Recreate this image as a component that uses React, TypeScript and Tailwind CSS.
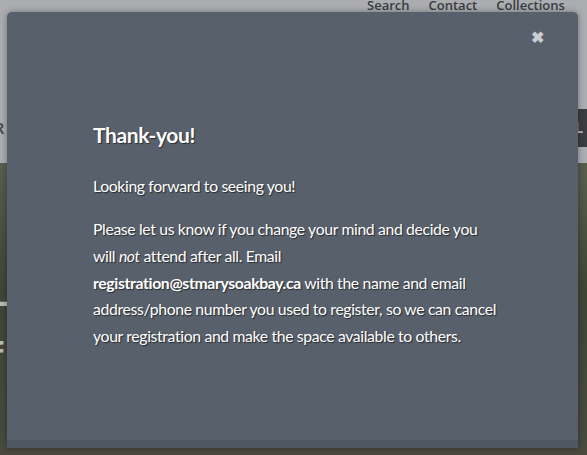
import React from "react";

export default function App() {
  const shadow = "[text-shadow:1px_1px_1px_rgba(0,0,0,0.55)]";
  return (
    <div className="relative w-[587px] h-[455px] overflow-hidden bg-[#abadb1]" style={{ fontFamily: "Lato, 'Open Sans', sans-serif" }}>
      {/* page behind */}
      <div className="flex flex-col h-full">
        <div className="h-[163px] relative flex flex-col">
          <div className="flex gap-[19px] pl-[367px] -mt-[4px] text-[13px] font-semibold text-[#3a3c41] whitespace-nowrap" style={{ fontFamily: "'Open Sans', sans-serif" }}>
            <span>Search</span>
            <span>Contact</span>
            <span>Collections</span>
          </div>
          <div className="flex justify-between items-center mt-[93px]">
            <span className="text-[16px] font-bold text-[#4a4c52] -ml-[6px]">R</span>
            <div className="w-[12px] h-[38px] bg-[#3b3d42] flex items-center text-[15px] font-bold text-[#b8bbc0] overflow-hidden">L</div>
          </div>
        </div>
        <div className="flex-1 bg-[linear-gradient(180deg,#5a5d4e_0%,#3f4437_45%,#4a4a3f_100%)] relative">
          <div className="absolute left-[-14px] top-[118px] text-[44px] font-bold text-[#b9bab4] leading-none">H</div>
          <div className="absolute left-[-10px] top-[172px] text-[38px] font-bold text-[#b9bab4] leading-none">f</div>
        </div>
      </div>

      {/* modal */}
      <div className="absolute left-[7px] top-[12px] w-[571px] h-[436px] rounded-t-[5px] bg-[#57606b] shadow-[0_0_6px_rgba(0,0,0,0.35)] flex flex-col overflow-hidden">
        <div className="flex-1 relative">
          <button className="absolute right-[34px] top-[17px] text-[#c9cdd2] text-[16px] font-bold leading-none">✖</button>
          <div className={`pl-[86px] pt-[110px] text-white ${shadow}`}>
            <h2 className="text-[21px] font-bold leading-[26px] tracking-[-0.4px]">Thank-you!</h2>
            <p className="mt-[24px] text-[15.75px] leading-[27px] tracking-[-0.35px]">Looking forward to seeing you!</p>
            <p className="mt-[17px] text-[15.75px] leading-[26.8px] tracking-[-0.35px] whitespace-nowrap">
              Please let us know if you change your mind and decide you
              <br />
              will <em>not</em> attend after all. Email
              <br />
              <strong>registration@stmarysoakbay.ca</strong> with the name and email
              <br />
              address/phone number you used to register, so we can cancel
              <br />
              your registration and make the space available to others.
            </p>
          </div>
        </div>
        <div className="h-[8px] bg-[#4f5762]" />
      </div>
    </div>
  );
}
